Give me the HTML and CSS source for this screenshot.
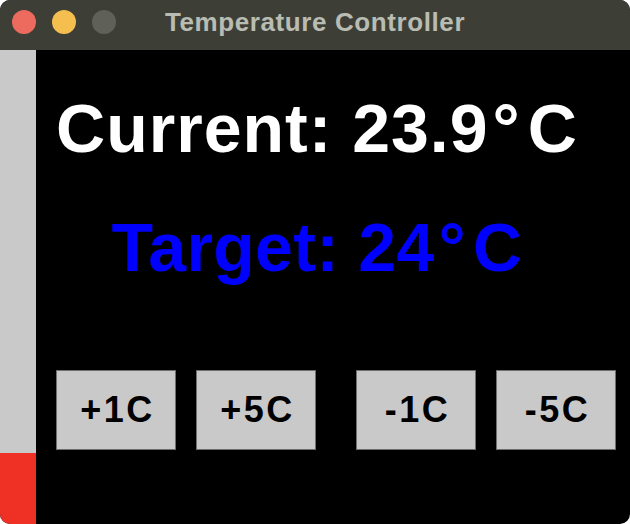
FILE: index.html
```html
<!DOCTYPE html>
<html>
<head>
<meta charset="utf-8">
<link rel="stylesheet" href="styles.css">
</head>
<body>
<div class="window">
  <div class="titlebar">
    <div class="lights">
      <span class="light red"></span>
      <span class="light yellow"></span>
      <span class="light gray"></span>
    </div>
    <div class="title">Temperature Controller</div>
    <div></div>
  </div>
  <div class="content">
    <div class="sidebar">
      <div class="level-empty"></div>
      <div class="level-fill"></div>
    </div>
    <div class="main">
      <div class="readings">
        <div class="current">Current: 23.9<span class="deg">°</span>C</div>
        <div class="target">Target: 24<span class="deg">°</span>C</div>
      </div>
      <div class="buttons">
        <div class="group">
          <div class="btn">+1C</div>
          <div class="btn">+5C</div>
        </div>
        <div class="group">
          <div class="btn">-1C</div>
          <div class="btn">-5C</div>
        </div>
      </div>
    </div>
  </div>
</div>
</body>
</html>
```
FILE: styles.css
```css
html, body {
  margin: 0;
  padding: 0;
  background: #ffffff;
}
.window {
  width: 630px;
  height: 524px;
  border-radius: 10px;
  overflow: hidden;
  background: #000000;
  display: flex;
  flex-direction: column;
  font-family: "Liberation Sans", Arial, sans-serif;
}
.titlebar {
  height: 50px;
  background: #3d3f37;
  display: grid;
  grid-template-columns: 1fr auto 1fr;
  align-items: center;
}
.lights {
  display: flex;
  gap: 16px;
  padding-left: 12px;
  margin-top: -6px;
}
.light {
  width: 24px;
  height: 24px;
  border-radius: 50%;
  display: block;
}
.light.red { background: #ed6a5e; }
.light.yellow { background: #f5bf4f; }
.light.gray { background: #5f6158; }
.title {
  color: #b9bcb2;
  font-weight: bold;
  font-size: 26px;
  letter-spacing: 0.6px;
  line-height: 30px;
  margin-top: -6px;
}
.content {
  flex: 1;
  display: flex;
}
.sidebar {
  width: 36px;
  display: flex;
  flex-direction: column;
}
.level-empty {
  flex: 1;
  background: #c9c9c9;
}
.level-fill {
  height: 71px;
  background: #ee3124;
}
.main {
  flex: 1;
  padding-left: 20px;
  display: flex;
  flex-direction: column;
}
.readings {
  padding-right: 52px;
  text-align: center;
  font-weight: bold;
  font-size: 68px;
  line-height: 70px;
  white-space: nowrap;
}
.deg {
  margin-left: 4px;
  margin-right: 7px;
}
.current {
  color: #ffffff;
  letter-spacing: 1px;
  margin-top: 43px;
}
.target {
  color: #0000ff;
  letter-spacing: 0.3px;
  margin-top: 49px;
}
.buttons {
  display: flex;
  gap: 40px;
  margin-top: 88px;
}
.group {
  display: flex;
  gap: 20px;
}
.btn {
  box-sizing: border-box;
  width: 120px;
  height: 80px;
  border: 1px solid #6e6e6e;
  background: #c9c9c9;
  color: #000000;
  font-weight: bold;
  font-size: 36px;
  letter-spacing: 2.5px;
  padding-left: 3px;
  display: flex;
  align-items: center;
  justify-content: center;
}
```
